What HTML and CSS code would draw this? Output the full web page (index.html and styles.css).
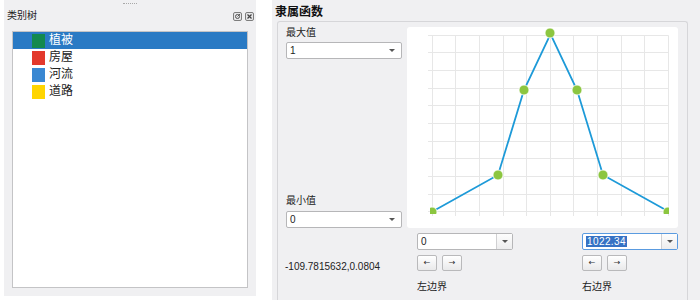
FILE: index.html
```html
<!DOCTYPE html>
<html lang="zh-CN">
<head>
    <meta charset="UTF-8">
    <title>隶属函数</title>
    <link rel="stylesheet" href="styles.css">
</head>
<body>
<div class="window">
    <div class="tree-panel">
        <div class="grip"><span></span></div>
        <div class="panel-head">
            <span class="panel-title">类别树</span>
            <span class="head-btns">
                <svg width="9" height="9" viewBox="0 0 9 9">
                    <rect x="0.5" y="0.5" width="8" height="8" rx="1.5" fill="#e6e6e8" stroke="#7d7d7d"/>
                    <circle cx="4.5" cy="4.5" r="2" fill="none" stroke="#555"/>
                    <path d="M4.5 4.5 L7 2" stroke="#555"/>
                </svg>
                <svg width="9" height="9" viewBox="0 0 9 9">
                    <rect x="0.5" y="0.5" width="8" height="8" rx="1.5" fill="#e6e6e8" stroke="#7d7d7d"/>
                    <path d="M2.5 2.5 L6.5 6.5 M6.5 2.5 L2.5 6.5" stroke="#444" stroke-width="1.2"/>
                </svg>
            </span>
        </div>
        <ul class="tree">
            <li class="tree-item selected"><span class="swatch sw-veg"></span>植被</li>
            <li class="tree-item"><span class="swatch sw-house"></span>房屋</li>
            <li class="tree-item"><span class="swatch sw-river"></span>河流</li>
            <li class="tree-item"><span class="swatch sw-road"></span>道路</li>
        </ul>
    </div>

    <div class="func-panel">
        <div class="func-title">隶属函数</div>
        <div class="group">
            <div class="layout">
                <div class="side">
                    <div class="field">
                        <div class="label">最大值</div>
                        <div class="combo"><span class="val">1</span><i class="caret"></i></div>
                    </div>
                    <div class="field">
                        <div class="label">最小值</div>
                        <div class="combo"><span class="val">0</span><i class="caret"></i></div>
                    </div>
                </div>

                <div class="chart">
                    <svg width="271" height="201" viewBox="0 0 271 201">
                        <defs>
                            <clipPath id="plot">
                                <rect x="23" y="0" width="239" height="187"/>
                            </clipPath>
                        </defs>
                        <g stroke="#e7e7e7" stroke-width="1">
                            <path d="M25.5 8.5V189 M48.5 8.5V189 M72.5 8.5V189 M96.5 8.5V189 M119.5 8.5V189 M143.5 8.5V189 M166.5 8.5V189 M190.5 8.5V189 M214.5 8.5V189 M237.5 8.5V189 M261.5 8.5V189"/>
                            <path d="M21 8.5H261.5 M21 25.5H261.5 M21 43.5H261.5 M21 61.5H261.5 M21 78.5H261.5 M21 96.5H261.5 M21 114.5H261.5 M21 131.5H261.5 M21 149.5H261.5 M21 167.5H261.5 M21 184.5H261.5"/>
                        </g>
                        <polyline points="25.5,184.5 91,148 117,63 143.5,7 170,63 196,148 261.5,184.5" fill="none" stroke="#1d9ad8" stroke-width="1.8"/>
                        <g clip-path="url(#plot)" fill="#8cc640" stroke="#fff" stroke-width="0.8">
                            <circle cx="25" cy="185" r="5"/>
                            <circle cx="91" cy="148" r="5"/>
                            <circle cx="117" cy="63" r="5"/>
                            <circle cx="143" cy="6" r="5"/>
                            <circle cx="170" cy="63" r="5"/>
                            <circle cx="196" cy="148" r="5"/>
                            <circle cx="261" cy="185" r="5"/>
                        </g>
                    </svg>
                </div>

                <div class="coord">-109.7815632,0.0804</div>

                <div class="bounds">
                    <div class="bound">
                        <div class="combo split"><span class="val">0</span><b class="drop"><i class="caret"></i></b></div>
                        <div class="steps"><button>&larr;</button><button>&rarr;</button></div>
                        <div class="label bound-label">左边界</div>
                    </div>
                    <div class="bound">
                        <div class="combo split focus"><span class="val"><span class="sel">1022.34</span></span><b class="drop"><i class="caret"></i></b></div>
                        <div class="steps"><button>&larr;</button><button>&rarr;</button></div>
                        <div class="label bound-label">右边界</div>
                    </div>
                </div>
            </div>
        </div>
    </div>
</div>
</body>
</html>
```

FILE: styles.css
```css
* {
    box-sizing: border-box;
}
body {
    margin: 0;
    background: #fff;
    font-family: "Liberation Sans", "Noto Sans CJK SC", sans-serif;
    color: #222;
}
.window {
    display: flex;
    height: 300px;
    overflow: hidden;
}

/* left: class tree */
.tree-panel {
    width: 252px;
    height: 296px;
    margin-left: 4px;
    background: #f0f0f2;
    display: flex;
    flex-direction: column;
}
.grip {
    height: 6px;
    display: flex;
    justify-content: center;
    align-items: center;
}
.grip span {
    width: 14px;
    border-top: 1px dotted #a8a8a8;
}
.panel-head {
    height: 20px;
    display: flex;
    align-items: center;
    justify-content: space-between;
    padding: 0 2px 0 3px;
}
.panel-title {
    font-size: 10px;
    line-height: 12px;
}
.head-btns {
    display: flex;
    gap: 3px;
}
.head-btns svg {
    display: block;
}
.tree {
    flex: 1;
    margin: 5px 8px 8px;
    padding: 0;
    list-style: none;
    background: #fff;
    border: 1px solid #c4c4c6;
}
.tree-item {
    height: 17px;
    display: flex;
    align-items: center;
    padding-left: 19px;
    font-size: 12px;
    line-height: 17px;
    color: #222;
}
.tree-item.selected {
    background: #2a7ac4;
    color: #fff;
}
.swatch {
    width: 13px;
    height: 14px;
    margin-right: 4px;
}
.sw-veg { background: #13894e; }
.sw-house { background: #e3392c; }
.sw-river { background: #3a88d2; }
.sw-road { background: #ffd500; }

/* right: membership function */
.func-panel {
    flex: 1;
    margin-left: 16px;
    background: #f0f0f2;
}
.func-title {
    height: 21px;
    padding: 3px 0 0 3px;
    font-size: 12px;
    line-height: 18px;
    font-weight: bold;
    color: #111;
}
.group {
    height: 279px;
    margin: 0 12px 0 5px;
    padding: 5px 9px 0 8px;
    border: 1px solid #d6d6d9;
    border-bottom: none;
    border-radius: 3px 3px 0 0;
}
.layout {
    display: grid;
    grid-template-columns: 116px 271px;
    gap: 5px;
}
.side {
    display: flex;
    flex-direction: column;
    justify-content: space-between;
}
.label {
    font-size: 10px;
    line-height: 12px;
}
.field .combo {
    margin-top: 3px;
}
.field + .field .combo {
    margin-top: 4px;
}
.combo {
    height: 17px;
    display: flex;
    align-items: center;
    justify-content: space-between;
    background: #fff;
    border: 1px solid #b6b6b8;
    border-radius: 2px;
    font-size: 10px;
}
.combo .val {
    padding-left: 3px;
    line-height: 12px;
}
.caret {
    width: 0;
    height: 0;
    margin-right: 6px;
    border-left: 3px solid transparent;
    border-right: 3px solid transparent;
    border-top: 3px solid #555;
}
.combo.split {
    width: 96px;
}
.drop {
    width: 16px;
    height: 100%;
    display: flex;
    align-items: center;
    justify-content: center;
    border-left: 1px solid #d0d0d2;
    background: linear-gradient(#fdfdfd, #ededee);
}
.drop .caret {
    margin-right: 0;
}
.combo.focus {
    border-color: #5a9be0;
}
.sel {
    background: #3672c4;
    color: #fff;
    padding: 0 1px;
    letter-spacing: 0.4px;
}
.chart {
    height: 201px;
    background: #fff;
    border-radius: 3px;
}
.chart svg {
    display: block;
}
.coord {
    padding-top: 28px;
    font-size: 10px;
    line-height: 12px;
    margin-left: -1px;
}
.bounds {
    display: flex;
    justify-content: space-between;
    padding-left: 10px;
}
.steps {
    display: flex;
    gap: 5px;
    margin-top: 5px;
}
.steps button {
    width: 20px;
    height: 16px;
    padding: 0;
    border: 1px solid #b9b9bb;
    border-radius: 2px;
    background: linear-gradient(#ffffff, #e9e9ea);
    font-family: "DejaVu Sans", sans-serif;
    font-size: 8px;
    line-height: 14px;
    color: #333;
}
.bound-label {
    margin-top: 10px;
}
```
